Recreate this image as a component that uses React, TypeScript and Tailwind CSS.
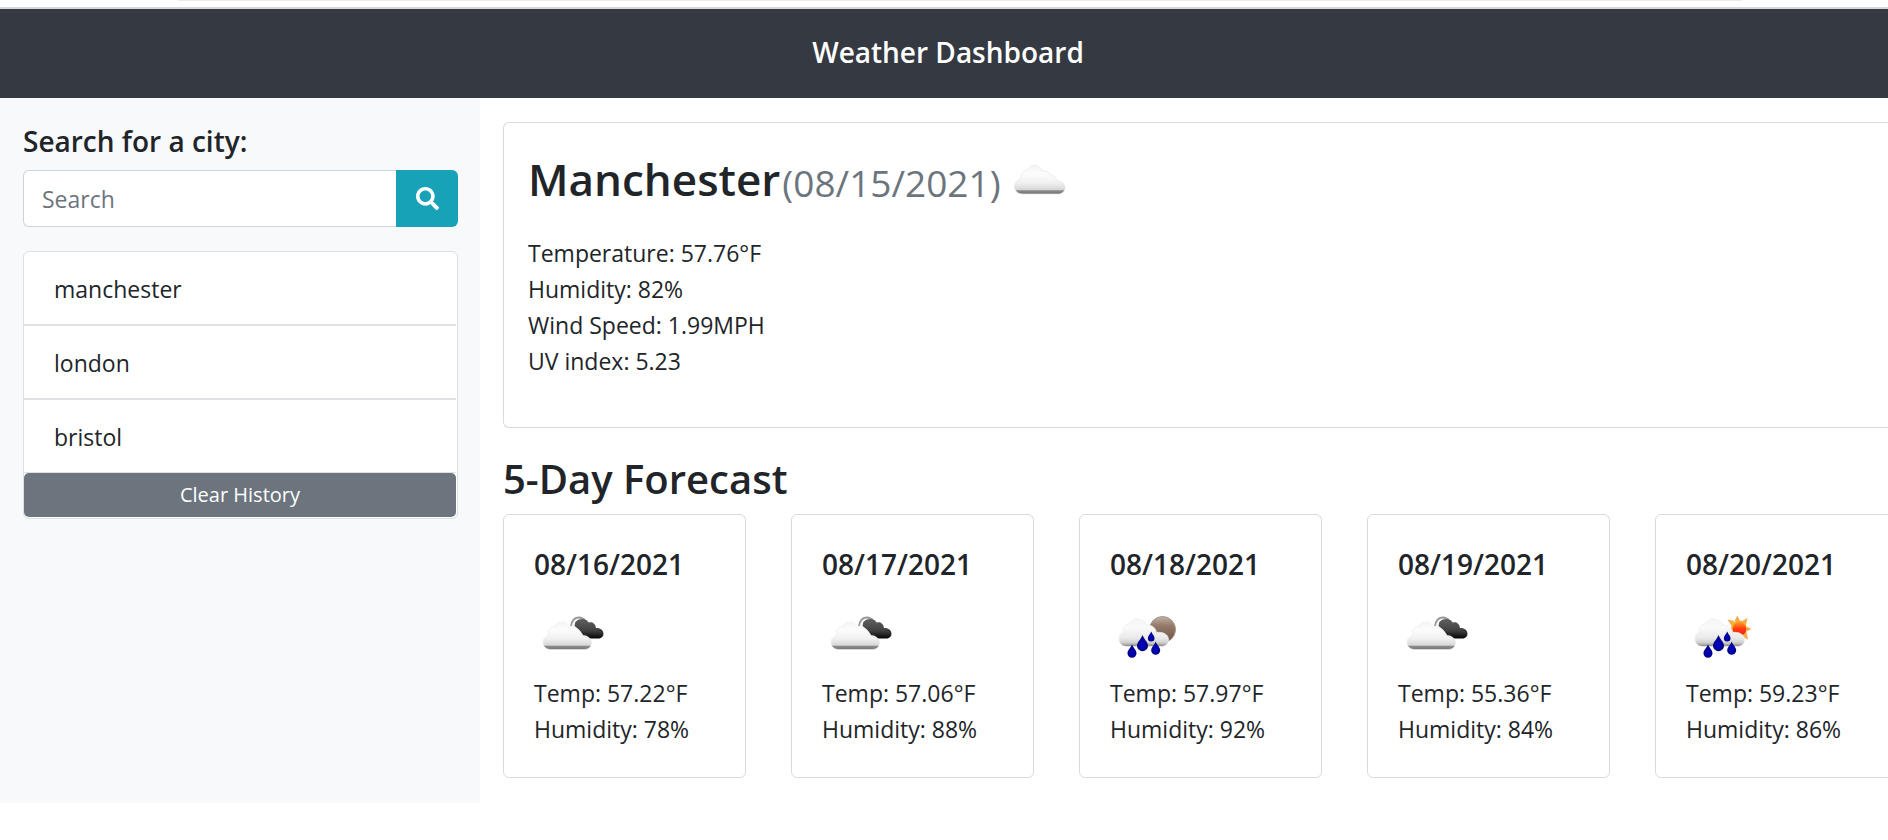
import { FaSearch } from "react-icons/fa";

type Sky = "cloudy" | "rain-night" | "rain-day";

interface Day {
  date: string;
  sky: Sky;
  temp: string;
  humidity: string;
}

const days: Day[] = [
  { date: "08/16/2021", sky: "cloudy", temp: "57.22", humidity: "78" },
  { date: "08/17/2021", sky: "cloudy", temp: "57.06", humidity: "88" },
  { date: "08/18/2021", sky: "rain-night", temp: "57.97", humidity: "92" },
  { date: "08/19/2021", sky: "cloudy", temp: "55.36", humidity: "84" },
  { date: "08/20/2021", sky: "rain-day", temp: "59.23", humidity: "86" },
];

const cities = ["manchester", "london", "bristol"];

function Gradients() {
  return (
    <svg className="absolute size-0" aria-hidden="true">
      <defs>
        <linearGradient id="cloud" x1="0" y1="0" x2="0" y2="1">
          <stop offset="0" stopColor="#f5f5f5" />
          <stop offset="0.3" stopColor="#fcfcfc" />
          <stop offset="0.6" stopColor="#f1f1f1" />
          <stop offset="0.84" stopColor="#d8d8d8" />
          <stop offset="0.89" stopColor="#8a8a8a" />
          <stop offset="1" stopColor="#757575" />
        </linearGradient>
        <linearGradient id="raincloud" x1="0" y1="0" x2="0" y2="1">
          <stop offset="0" stopColor="#f4f4f4" />
          <stop offset="0.3" stopColor="#fafafa" />
          <stop offset="0.7" stopColor="#e9e9e9" />
          <stop offset="0.86" stopColor="#cfcfcf" />
          <stop offset="1" stopColor="#858585" />
        </linearGradient>
        <linearGradient id="dark" x1="0" y1="0" x2="0" y2="1">
          <stop offset="0" stopColor="#606060" />
          <stop offset="0.6" stopColor="#404040" />
          <stop offset="1" stopColor="#050505" />
        </linearGradient>
        <linearGradient id="moon" x1="0" y1="0" x2="0" y2="1">
          <stop offset="0" stopColor="#c3b2a6" />
          <stop offset="0.35" stopColor="#937a69" />
          <stop offset="1" stopColor="#6b5342" />
        </linearGradient>
        <linearGradient id="sun" x1="0" y1="0" x2="0" y2="1">
          <stop offset="0" stopColor="#ff9a1f" />
          <stop offset="0.5" stopColor="#ff3a10" />
          <stop offset="1" stopColor="#f51a0a" />
        </linearGradient>
        <radialGradient id="drop" cx="0.5" cy="0.6" r="0.6">
          <stop offset="0" stopColor="#0505d0" />
          <stop offset="0.5" stopColor="#0202a0" />
          <stop offset="1" stopColor="#02025c" />
        </radialGradient>
      </defs>
    </svg>
  );
}

function CloudIcon() {
  return (
    <svg viewBox="0 0 75 75" className="size-[75px]" role="img" aria-label="Cloudy">
      <path
        d="M22 53C16.500 53 13.500 49.500 13.500 45.500C13.500 41.500 16.500 39 20 37.500C19.500 32.500 22.500 29.500 26 29.500C27 26.500 30 24.500 33 24.500C37 24.500 40 27 41 30C44 29 49 31 50 34.500C53 34.500 55.500 36.500 56 40C61 40 64 43 64 46.500C64 50.500 61 53 57 53Z"
        fill="url(#cloud)"
        stroke="#e2e2e2"
        strokeOpacity="0.6"
      />
    </svg>
  );
}

function Rain() {
  return (
    <g fill="url(#drop)">
      <path d="M22 47.500C23.500 51 26.500 53 26.500 56.200A4.500 4.500 0 0 1 17.500 56.200C17.500 53 20.500 51 22 47.500Z" />
      <path d="M32.500 38C34.500 43 38 45.200 38 48.700A5.500 5.500 0 0 1 27 48.700C27 45.200 30.500 43 32.500 38Z" />
      <path d="M41.200 34.500C42.300 37.500 44.500 38.800 44.500 41.200A3.300 3.300 0 0 1 37.900 41.200C37.900 38.800 40.100 37.500 41.200 34.500Z" />
      <path d="M45.700 44.500C47.200 48.500 50.200 50.200 50.200 53.300A4.500 4.500 0 0 1 41.200 53.300C41.200 50.200 44.200 48.500 45.700 44.500Z" />
    </g>
  );
}

function SkyIcon({ sky }: { sky: Sky }) {
  if (sky === "cloudy") {
    return (
      <svg viewBox="0 0 75 75" className="size-[75px]" role="img" aria-label="Broken clouds">
        <path d="M37 29C38 23 41.500 20.500 45 20.500C48.500 20.500 50 22 51.500 24" fill="none" stroke="#9a9a9a" strokeWidth="1.800" />
        <path
          d="M41 26C42.500 22.500 46 22 48.500 22C51.500 22 53.500 23.500 54.500 25.500C58 24.500 61.500 26.500 62 31C66 30.500 69.500 33 69.500 36.500C69.500 40 67 41.500 64 41.500H50C49 35 43 31 40.500 29Z"
          fill="url(#dark)"
        />
        <path
          d="M17 52.500C12 52.500 9 49.500 9 45.500C9 41.500 11.500 39 14.500 38C13.500 32.500 17 29 21 29C22.500 26.500 25 25 28 25C32 25 34 27 35.500 30C40 28.500 45.500 31.500 46 38.500C52 37.500 57.500 41 57.500 45.500C57.500 50 54.500 52.500 50 52.500Z"
          fill="url(#cloud)"
          stroke="#ececec"
          strokeOpacity="0.6"
        />
      </svg>
    );
  }

  return (
    <svg viewBox="0 0 75 75" className="size-[75px]" role="img" aria-label="Rain">
      {sky === "rain-night" ? (
        <circle cx="52.500" cy="32.500" r="13" fill="url(#moon)" stroke="#a39488" />
      ) : (
        <g fill="#f3ac4a">
          <path d="M48.500 24L51.300 18.500L54 24Z" />
          <path d="M55.500 24.500L61.500 21L60 28Z" />
          <path d="M60.500 29.500L65.500 32L60.500 34.500Z" />
          <path d="M60.500 35L62 42.500L55.500 39.500Z" />
          <path d="M41.500 22.500L48.500 24L45.500 29Z" />
          <circle cx="53" cy="31.500" r="8" fill="#ffa62b" />
          <circle cx="53.500" cy="32" r="6.800" fill="url(#sun)" />
        </g>
      )}
      <path
        d="M17 49.500C12 49.500 9 46 9 42C9 38 11 36 13 34.500C13 30 16 27 19 26.500C21 23.500 24.500 22 27.500 22C32 22 35 24.500 37 28C42 28 46 31 46.500 35.500C53 34.500 58.500 37.500 58.500 42.500C58.500 47 55.500 49.500 51 49.500Z"
        fill="url(#raincloud)"
        stroke="#eeeeee"
        strokeOpacity="0.7"
      />
      <Rain />
    </svg>
  );
}

export default function App() {
  return (
    <div className="overflow-hidden bg-white font-['Open_Sans','Noto_Sans',sans-serif] text-[23px] leading-9 text-[#212529]">
      <Gradients />
      <div className="h-[9px] border-b-2 border-[#d5d7da] bg-white pr-[146px] pl-[178px]">
        <div className="h-px bg-[#ececee]" />
      </div>
      <header className="flex h-[89px] items-center justify-center bg-[#353941] pb-1 pl-2">
        <h1 className="text-[28px] font-semibold text-white">Weather Dashboard</h1>
      </header>

      <div className="flex">
        <aside className="w-[480px] shrink-0 bg-[#f7f9fb] pt-[25px] pr-[22px] pb-[284px] pl-[23px]">
          <form onSubmit={(event) => event.preventDefault()}>
            <label htmlFor="city" className="mb-[11px] block text-[28px] font-semibold">
              Search for a city:
            </label>
            <div className="flex h-[57px]">
              <input
                id="city"
                type="text"
                placeholder="Search"
                className="min-w-0 flex-1 rounded-l-md border border-r-0 border-[#ced4da] bg-white px-[18px] outline-none placeholder:text-[#6c757d]"
              />
              <button type="submit" aria-label="Search" className="flex w-[62px] items-center justify-center rounded-r-md bg-[#17a2b8] text-white">
                <FaSearch className="size-[23px]" />
              </button>
            </div>
          </form>

          <div className="mt-6 rounded-md border border-[#dcdfe3] bg-white pr-px pb-px">
            <ul>
              {cities.map((city) => (
                <li key={city} className="border-b-2 border-[#dfe1e4] last:border-b">
                  <button type="button" className="block h-[72px] w-full px-[30px] pt-0.5 text-left">
                    {city}
                  </button>
                </li>
              ))}
            </ul>
            <button type="button" className="block h-11 w-full rounded-[5px] bg-[#6c757d] text-[20px] text-white">
              Clear History
            </button>
          </div>
        </aside>

        <main className="min-w-0 flex-1 overflow-hidden pt-6 pl-[23px]">
          <section className="h-[306px] rounded-l-md border border-r-0 border-[#dadada] px-6 pt-[18px]">
            <div className="flex h-[75px] items-center">
              <h2 className="text-[44px] font-semibold">Manchester</h2>
              <span className="pt-2 pl-0.5 text-[37px] text-[#6c757d]">(08/15/2021)</span>
              <CloudIcon />
            </div>
            <div className="mt-[19px]">
              <p>Temperature: 57.76°F</p>
              <p>Humidity: 82%</p>
              <p>Wind Speed: 1.99MPH</p>
              <p>UV index: 5.23</p>
            </div>
          </section>

          <h2 className="mt-6 mb-2 text-[40px] leading-[54px] font-semibold">5-Day Forecast</h2>
          <div className="flex gap-[45px]">
            {days.map((day) => (
              <article key={day.date} className="h-[264px] w-[243px] shrink-0 rounded-md border border-[#dadada] px-[30px] pt-[31px]">
                <h3 className="text-[28px] font-semibold">{day.date}</h3>
                <div className="mt-[15px]">
                  <SkyIcon sky={day.sky} />
                </div>
                <p className="mt-[3px]">Temp: {day.temp}°F</p>
                <p>Humidity: {day.humidity}%</p>
              </article>
            ))}
          </div>
        </main>
      </div>
    </div>
  );
}
